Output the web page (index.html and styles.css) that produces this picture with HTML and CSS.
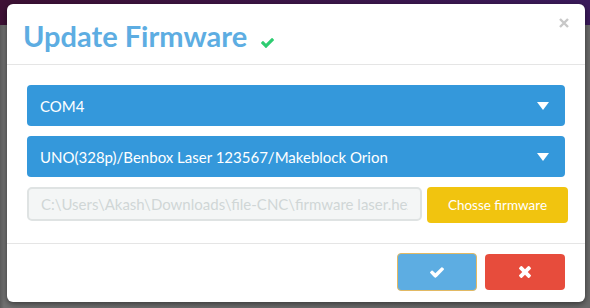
FILE: index.html
```html
<!DOCTYPE html>
<html lang="en">

<head>
    <meta charset="UTF-8">
    <meta name="viewport" content="width=device-width, initial-scale=1.0">
    <title>Update Firmware</title>
    <link rel="stylesheet" href="styles.css">
</head>

<body>
    <div class="backdrop">
        <div class="modal">
            <header class="modal-header">
                <h1 class="modal-title">Update Firmware</h1>
                <svg class="title-check" viewBox="121 334 1550 1188" aria-hidden="true">
                    <path d="M1671 566q0 40-28 68l-724 724-136 136q-28 28-68 28t-68-28l-136-136-362-362q-28-28-28-68t28-68l136-136q28-28 68-28t68 28l294 295 656-657q28-28 68-28t68 28l136 136q28 28 28 68z" />
                </svg>
                <button class="close" aria-label="Close">
                    <svg viewBox="0 0 10 10" aria-hidden="true">
                        <path d="M1 1L9 9M9 1L1 9" />
                    </svg>
                </button>
            </header>

            <main class="modal-body">
                <div class="select">
                    <span>COM4</span>
                    <svg class="caret" viewBox="0 0 12 8" aria-hidden="true">
                        <path d="M0 0H12L6 8Z" />
                    </svg>
                </div>
                <div class="select">
                    <span>UNO(328p)/Benbox Laser 123567/Makeblock Orion</span>
                    <svg class="caret" viewBox="0 0 12 8" aria-hidden="true">
                        <path d="M0 0H12L6 8Z" />
                    </svg>
                </div>
                <div class="file-row">
                    <input class="file-path" type="text" disabled
                        value="C:\Users\Akash\Downloads\file-CNC\firmware laser.hex">
                    <button class="btn btn-warning">Chosse firmware</button>
                </div>
            </main>

            <footer class="modal-footer">
                <button class="btn btn-ok" aria-label="OK">
                    <svg viewBox="121 334 1550 1188" aria-hidden="true">
                        <path d="M1671 566q0 40-28 68l-724 724-136 136q-28 28-68 28t-68-28l-136-136-362-362q-28-28-28-68t28-68l136-136q28-28 68-28t68 28l294 295 656-657q28-28 68-28t68 28l136 136q28 28 28 68z" />
                    </svg>
                </button>
                <button class="btn btn-cancel" aria-label="Cancel">
                    <svg viewBox="302 366 1188 1188" aria-hidden="true">
                        <path d="M1490 1322q0 40-28 68l-136 136q-28 28-68 28t-68-28l-294-294-294 294q-28 28-68 28t-68-28l-136-136q-28-28-28-68t28-68l294-294-294-294q-28-28-28-68t28-68l136-136q28-28 68-28t68 28l294 294 294-294q28-28 68-28t68 28l136 136q28 28 28 68t-28 68l-294 294 294 294q28 28 28 68z" />
                    </svg>
                </button>
            </footer>
        </div>
    </div>
</body>

</html>
```

FILE: styles.css
```css
/* Flat style firmware dialog over a dimmed app */

html,
body {
    margin: 0;
    padding: 0;
    height: 100%;
    overflow: hidden;
    font-family: 'Lato', 'Liberation Sans', sans-serif;
}

body {
    background:
        linear-gradient(to right, #3e1135, #3b1a5c) top / 100% 25px no-repeat,
        linear-gradient(to right, #5a5a5a, #727272 4px, #6a6a6a) ;
}

.backdrop {
    height: 100%;
    box-sizing: border-box;
    padding: 4px 5px 6px 7px;
}

.modal {
    height: 100%;
    background-color: #ffffff;
    border-radius: 6px;
    box-shadow: 0 2px 6px rgba(0, 0, 0, 0.5);
    display: flex;
    flex-direction: column;
}

/* Header */
.modal-header {
    height: 61px;
    box-sizing: border-box;
    padding: 0 16px;
    border-bottom: 1px solid #e5e5e5;
    display: flex;
    align-items: center;
    position: relative;
}

.modal-title {
    margin: 0;
    color: #5dade2;
    font-size: 29px;
    font-weight: 700;
    line-height: 1;
    margin-top: 2px;
}

.title-check {
    width: 13px;
    height: 10px;
    fill: #2ecc71;
    margin-left: 14px;
    margin-top: 17px;
}

.close {
    position: absolute;
    top: 13px;
    right: 15px;
    padding: 0;
    border: 0;
    background: none;
    width: 11px;
    height: 11px;
}

.close svg {
    display: block;
    width: 10px;
    height: 10px;
    stroke: #c8c8c8;
    stroke-width: 2.4;
}

/* Body */
.modal-body {
    padding: 20px;
    border-bottom: 1px solid #e5e5e5;
    display: flex;
    flex-direction: column;
    gap: 10px;
}

.select {
    height: 41px;
    box-sizing: border-box;
    padding: 0 16px 0 13px;
    background-color: #3498db;
    border-radius: 4px;
    color: #ffffff;
    font-size: 15px;
    display: flex;
    align-items: center;
    justify-content: space-between;
}

.caret {
    width: 12px;
    height: 8px;
    fill: #ffffff;
}

.file-row {
    display: flex;
    gap: 5px;
    margin-right: -3px;
    align-items: flex-start;
}

.file-path {
    flex: 1;
    min-width: 0;
    height: 34px;
    box-sizing: border-box;
    padding: 0 12px;
    background-color: #f4f6f6;
    border: 2px solid #dfe3e3;
    border-radius: 5px;
    color: #d0d6d6;
    font-family: inherit;
    font-size: 15px;
}

.btn {
    border: 0;
    border-radius: 4px;
    color: #ffffff;
    font-family: inherit;
    cursor: pointer;
}

.btn-warning {
    width: 141px;
    height: 36px;
    background-color: #f1c40f;
    font-size: 13.5px;
}

/* Footer */
.modal-footer {
    flex: 1;
    padding: 9px 20px 0;
    display: flex;
    justify-content: flex-end;
    align-items: flex-start;
    gap: 8px;
}

.btn-ok,
.btn-cancel {
    width: 80px;
    height: 36px;
    display: flex;
    align-items: center;
    justify-content: center;
}

.btn-ok {
    height: 38px;
    background-color: #5dade2;
    border: 1px solid #e2b963;
}

.btn-cancel {
    margin-top: 1px;
    background-color: #e74c3c;
}

.btn-ok svg {
    width: 14px;
    height: 11px;
    fill: #ffffff;
}

.btn-cancel svg {
    width: 12px;
    height: 12px;
    fill: #ffffff;
}
```
